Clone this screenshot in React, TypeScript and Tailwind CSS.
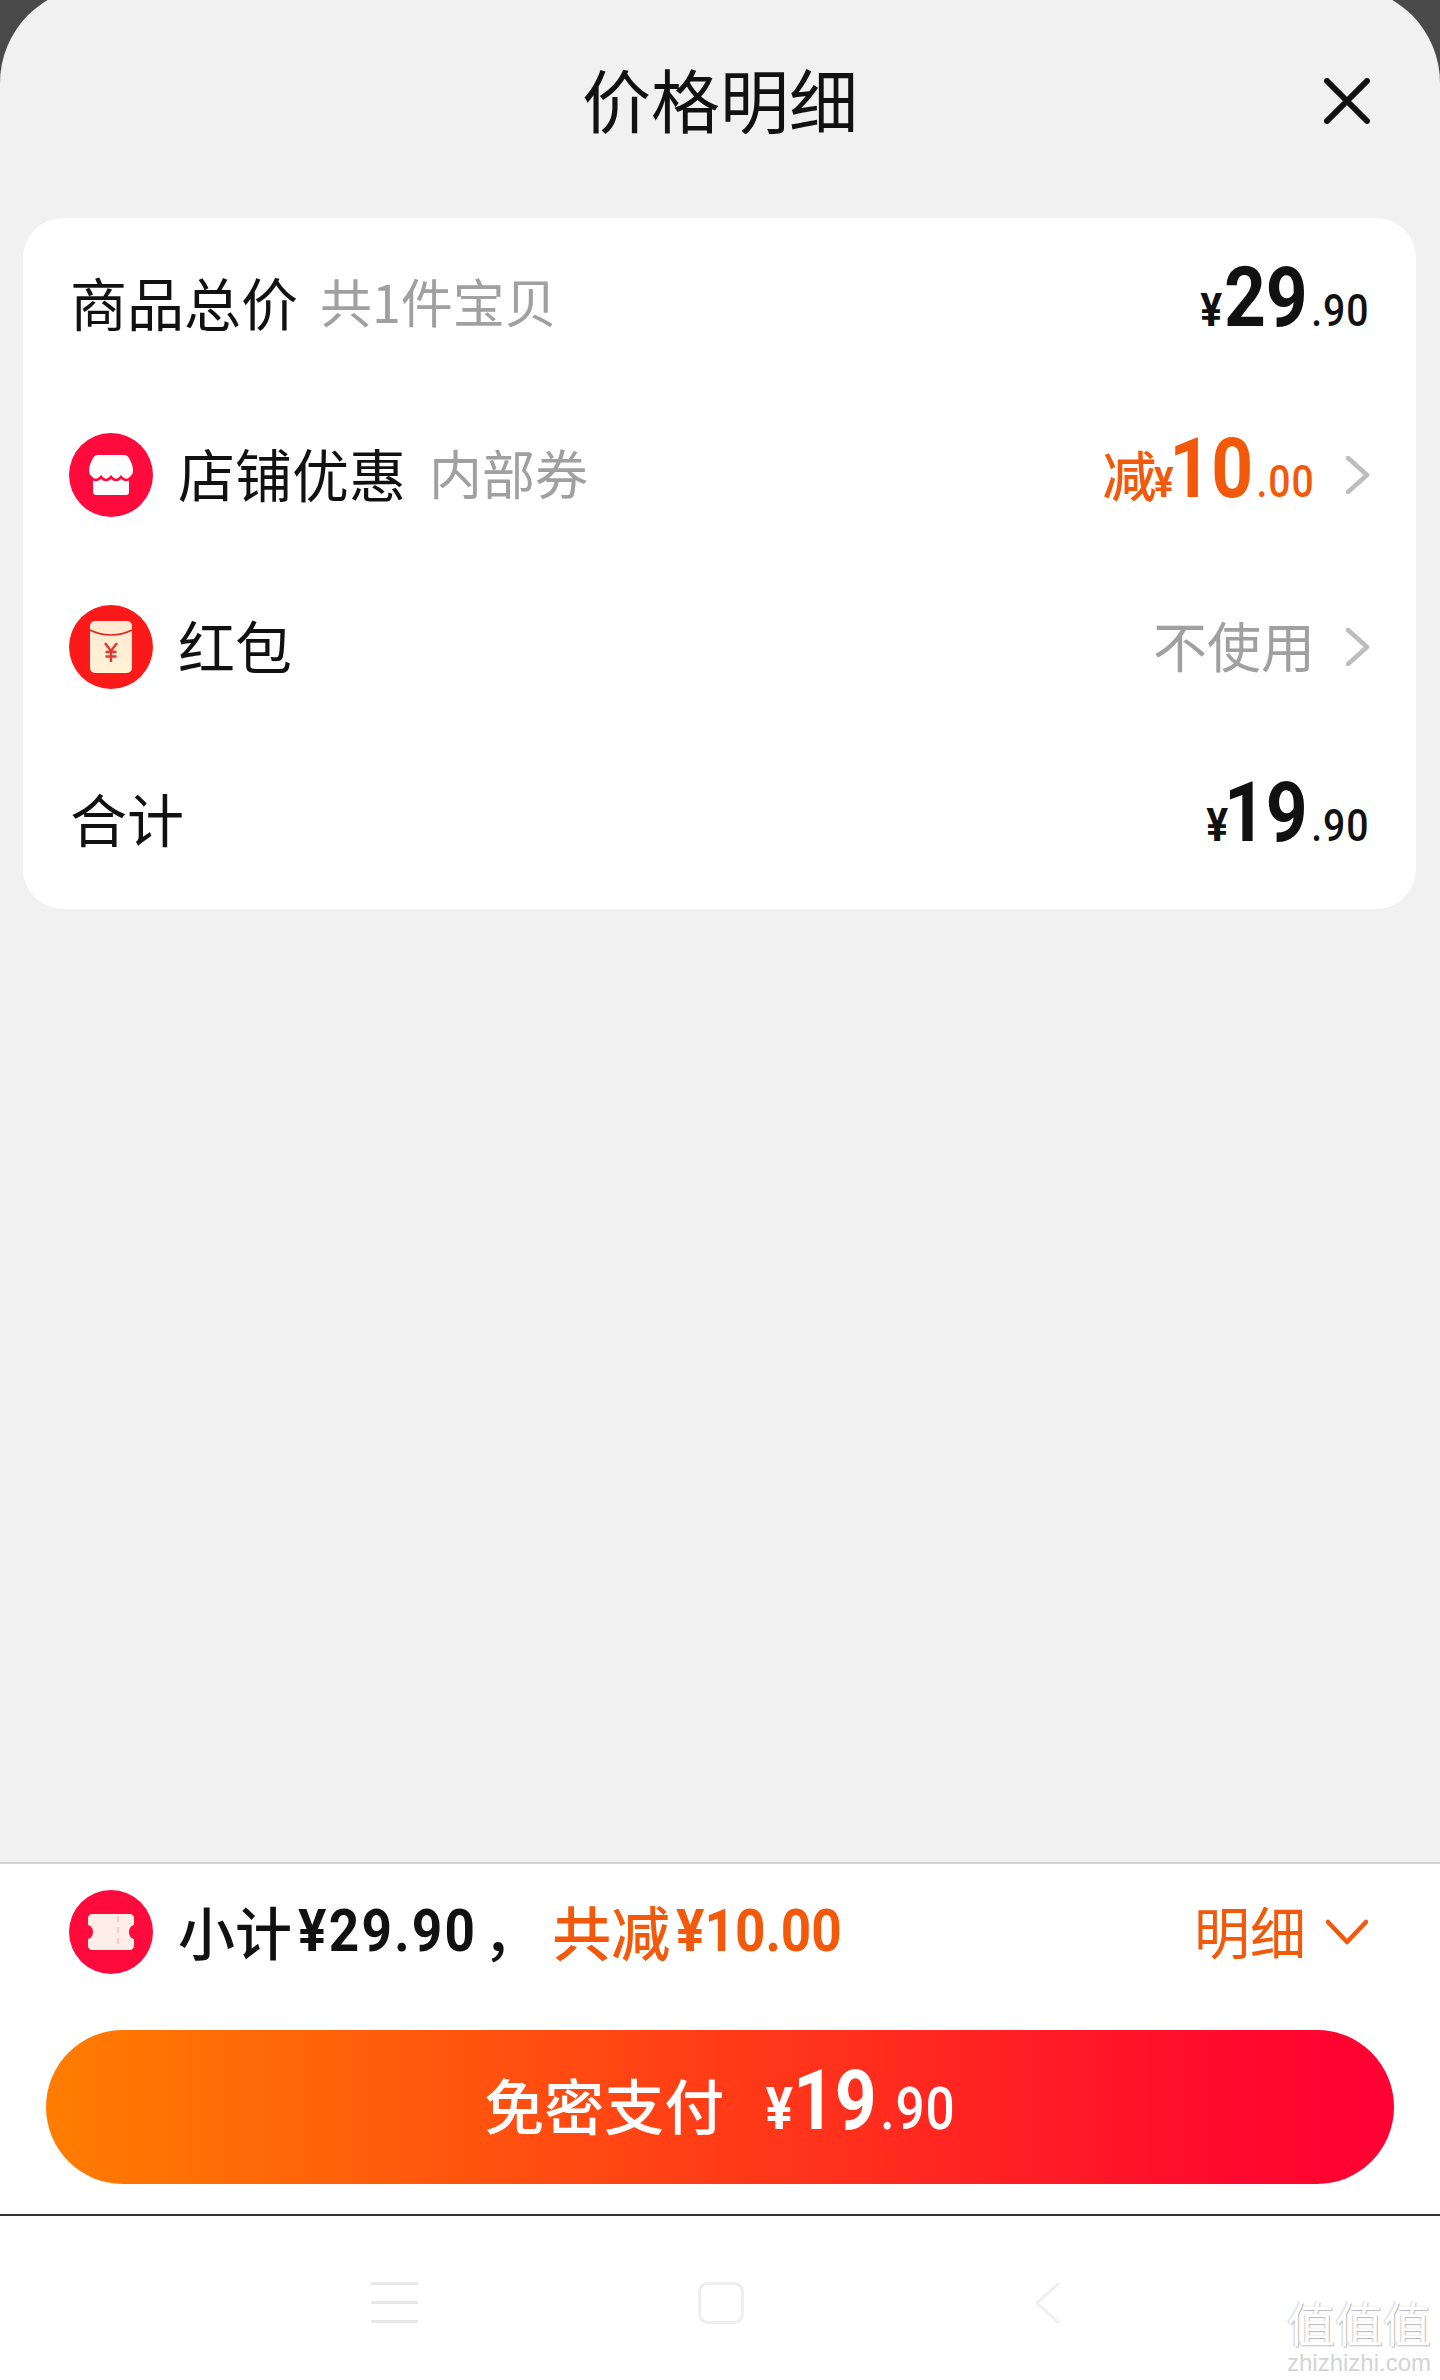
import React from "react";

const cjk = "font-['Noto_Sans_CJK_SC','Noto_Sans',sans-serif]";
const din = "font-['Roboto','Liberation_Sans',sans-serif]";

function Price({ unit, main, dec, color = "text-[#111111]", decSize = "text-[45px]", unitSize = "text-[47px]", unitGap = "" }: { unit: string; main: string; dec: string; color?: string; decSize?: string; unitSize?: string; unitGap?: string }) {
  return (
    <div className={`flex items-baseline origin-right scale-x-[0.87] pb-[12px] ${din} ${color} leading-none`}>
      <span className={`${unitSize} ${unitGap} font-bold`}>{unit}</span>
      <span className="text-[84px] font-bold">{main}</span>
      <span className={`${decSize} font-medium tracking-[1px] ml-[4px]`}>{dec}</span>
    </div>
  );
}

function Chevron() {
  return (
    <svg className="ml-[31px] shrink-0" width="24" height="38" viewBox="0 0 24 38" fill="none">
      <path d="M2 2L21 19L2 36" stroke="#bdbdbd" strokeWidth="4.5" strokeLinecap="round" strokeLinejoin="round" />
    </svg>
  );
}

function StoreIcon() {
  return (
    <div className="w-[84px] h-[84px] rounded-full bg-[#ff0a3c] flex items-center justify-center shrink-0">
      <svg width="44" height="40" viewBox="0 0 44 40">
        <path d="M9 0H35C37 0 39 1 40 3C42 7 44 11 44 15C44 19 42 22 40 23V37C40 39 39 40 37 40H7C5 40 4 39 4 37V23C2 22 0 19 0 15C0 11 2 7 4 3C5 1 7 0 9 0Z" fill="#fff" />
        <path d="M1 21.5C4 26 9 26 12 22C15 26 19 26 22 22C25 26 29 26 32 22C35 26 40 26 43 21.5" stroke="#ff0a3c" strokeWidth="2.6" fill="none" strokeLinecap="round" />
      </svg>
    </div>
  );
}

function PacketIcon() {
  return (
    <div className="w-[84px] h-[84px] rounded-full bg-[#fb1a1a] flex items-center justify-center shrink-0">
      <svg width="42" height="52" viewBox="0 0 42 52">
        <defs>
          <linearGradient id="pk" x1="0" y1="0" x2="0" y2="1">
            <stop offset="0" stopColor="#ffe9d2" />
            <stop offset="1" stopColor="#fff3d6" />
          </linearGradient>
        </defs>
        <rect width="42" height="52" rx="5" fill="url(#pk)" />
        <path d="M0 9C8 13 14 14 21 14C28 14 34 13 42 9" stroke="#e02a20" strokeWidth="1.6" fill="none" />
        <path d="M15 22L21 30L27 22M21 30V41M15.5 31H26.5M15.5 35.5H26.5" stroke="#e33a2e" strokeWidth="2.4" fill="none" />
      </svg>
    </div>
  );
}

function TicketIcon() {
  return (
    <div className="w-[84px] h-[84px] rounded-full bg-[#ff0a3c] flex items-center justify-center shrink-0">
      <svg width="46" height="36" viewBox="0 0 46 36">
        <path d="M4 0H42C44 0 46 2 46 4V11C42.5 12 41 15 41 18C41 21 42.5 24 46 25V32C46 34 44 36 42 36H4C2 36 0 34 0 32V25C3.5 24 5 21 5 18C5 15 3.5 12 0 11V4C0 2 2 0 4 0Z" fill="#fdeee8" />
        <path d="M30 2V34" stroke="#f5cfc8" strokeWidth="2.5" strokeDasharray="6 5" />
      </svg>
    </div>
  );
}

function Amount({ text, tracking }: { text: string; tracking: string }) {
  return (
    <span className={`inline-block origin-left scale-x-[0.9] -mr-[14px] ml-[6px] text-[59px] leading-none font-bold ${tracking} ${din}`}>{text}</span>
  );
}

export default function App() {
  return (
    <div className={`w-[1440px] h-[2380px] overflow-hidden bg-[#4a4a4a] flex flex-col ${cjk}`}>
      <div className="-mt-[13px] flex-1 bg-[#f1f1f1] rounded-t-[96px] flex flex-col">
        <header className="h-[231px] shrink-0 flex items-center justify-between px-[70px] pb-[8px]">
          <div className="w-[46px]" />
          <h1 className="text-[69px] leading-none font-normal text-[#111111]">价格明细</h1>
          <svg className="mt-[4px]" width="46" height="46" viewBox="0 0 46 46" fill="none">
            <path d="M3 3L43 43M43 3L3 43" stroke="#111111" strokeWidth="6" strokeLinecap="round" />
          </svg>
        </header>

        <section className="mx-[23px] w-[1393px] h-[691px] bg-white rounded-[40px] flex flex-col">
          <div className="h-[171px] flex items-center justify-between pl-[47px] pr-[47px]">
            <div className="flex items-center pb-[5px]">
              <span className="text-[57px] leading-none text-[#111111]">商品总价</span>
              <span className="text-[52px] leading-none text-[#a0a0a0] ml-[22px]">共1件宝贝</span>
            </div>
            <Price unit="¥" main="29" dec=".90" unitGap="mr-[2px]" />
          </div>
          <div className="h-[172px] flex items-center justify-between pl-[46px] pr-[46px]">
            <div className="flex items-center">
              <StoreIcon />
              <span className="text-[57px] leading-none text-[#111111] ml-[25px] pb-[5px]">店铺优惠</span>
              <span className="text-[53px] leading-none text-[#a0a0a0] ml-[23px] pb-[5px]">内部券</span>
            </div>
            <div className="flex items-center">
              <div className="flex items-baseline">
                <span className="text-[54px] leading-none font-medium text-[#f2590a] -mr-[26px]">减</span>
                <Price unit="¥" main="10" dec=".00" color="text-[#f2590a]" unitSize="text-[42px]" unitGap="-mr-[5px]" />
              </div>
              <Chevron />
            </div>
          </div>
          <div className="h-[172px] flex items-center justify-between pl-[46px] pr-[46px]">
            <div className="flex items-center">
              <PacketIcon />
              <span className="text-[57px] leading-none text-[#111111] ml-[25px] pb-[5px]">红包</span>
            </div>
            <div className="flex items-center">
              <span className="text-[54px] leading-none text-[#a0a0a0] pb-[5px]">不使用</span>
              <Chevron />
            </div>
          </div>
          <div className="h-[176px] pb-[4px] flex items-center justify-between pl-[47px] pr-[47px]">
            <span className="text-[57px] leading-none text-[#111111] pb-[3px]">合计</span>
            <Price unit="¥" main="19" dec=".90" unitGap="-mr-[5px]" />
          </div>
        </section>
      </div>

      <footer className="h-[518px] shrink-0 bg-white border-t-2 border-[#d4d4d4] flex flex-col">
        <div className="h-[136px] shrink-0 flex items-center justify-between pl-[69px] pr-[72px]">
          <div className="flex items-center">
            <TicketIcon />
            <div className="flex items-center ml-[25px] text-[#111111] pb-[4px]">
              <span className="text-[57px] leading-none font-medium">小计</span>
              <Amount text="¥29.90" tracking="tracking-[2.5px]" />
              <span className="text-[57px] leading-none font-medium">，</span>
            </div>
            <div className="flex items-center ml-[12px] text-[#f2590a] pb-[4px]">
              <span className="text-[59px] leading-none font-medium">共减</span>
              <Amount text="¥10.00" tracking="tracking-[0px]" />
            </div>
          </div>
          <div className="flex items-center text-[#f2590a]">
            <span className="text-[56px] leading-none pb-[4px]">明细</span>
            <svg className="ml-[20px]" width="42" height="26" viewBox="0 0 42 26" fill="none">
              <path d="M2 3L21 23L40 3" stroke="#f2590a" strokeWidth="4.5" strokeLinecap="round" strokeLinejoin="round" />
            </svg>
          </div>
        </div>
        <div className="mx-[46px] mt-[30px] h-[154px] shrink-0 rounded-full bg-[linear-gradient(90deg,#ff7d00_0%,#ff3c17_50%,#ff0a2e_88%,#ff0033_100%)] flex items-center justify-center text-white">
          <span className="text-[60px] leading-none font-medium pb-[7px]">免密支付</span>
          <div className="ml-[13px]">
            <Price unit="¥" main="19" dec=".90" color="text-white" decSize="text-[59px]" unitSize="text-[59px]" />
          </div>
        </div>
        <div className="mt-[30px] h-[2px] shrink-0 bg-[#333333]" />
        <nav className="flex-1 flex items-start pt-[66px] relative">
          <div className="ml-[371px] w-[47px] h-[41px] flex flex-col justify-between shrink-0">
            <div className="h-[3px] bg-[#e8e8e8]" />
            <div className="h-[3px] bg-[#e8e8e8]" />
            <div className="h-[3px] bg-[#e8e8e8]" />
          </div>
          <div className="ml-[280px] w-[46px] h-[42px] rounded-[10px] border-[3px] border-[#eeeeee] shrink-0" />
          <svg className="ml-[291px] shrink-0" width="26" height="42" viewBox="0 0 26 42" fill="none">
            <path d="M24 1L2 21L24 41" stroke="#efefef" strokeWidth="3" />
          </svg>
          <div className="absolute right-[9px] bottom-[5px] flex flex-col items-center">
            <span className="text-[48px] leading-[48px] text-white [text-shadow:1px_1px_1px_#b8b8b8,-1px_0_1px_#cfcfcf]">值值值</span>
            <span className="mt-[6px] text-[24px] leading-none text-[#d4d4d4] font-['Liberation_Sans',sans-serif]">zhizhizhi.com</span>
          </div>
        </nav>
      </footer>
    </div>
  );
}
